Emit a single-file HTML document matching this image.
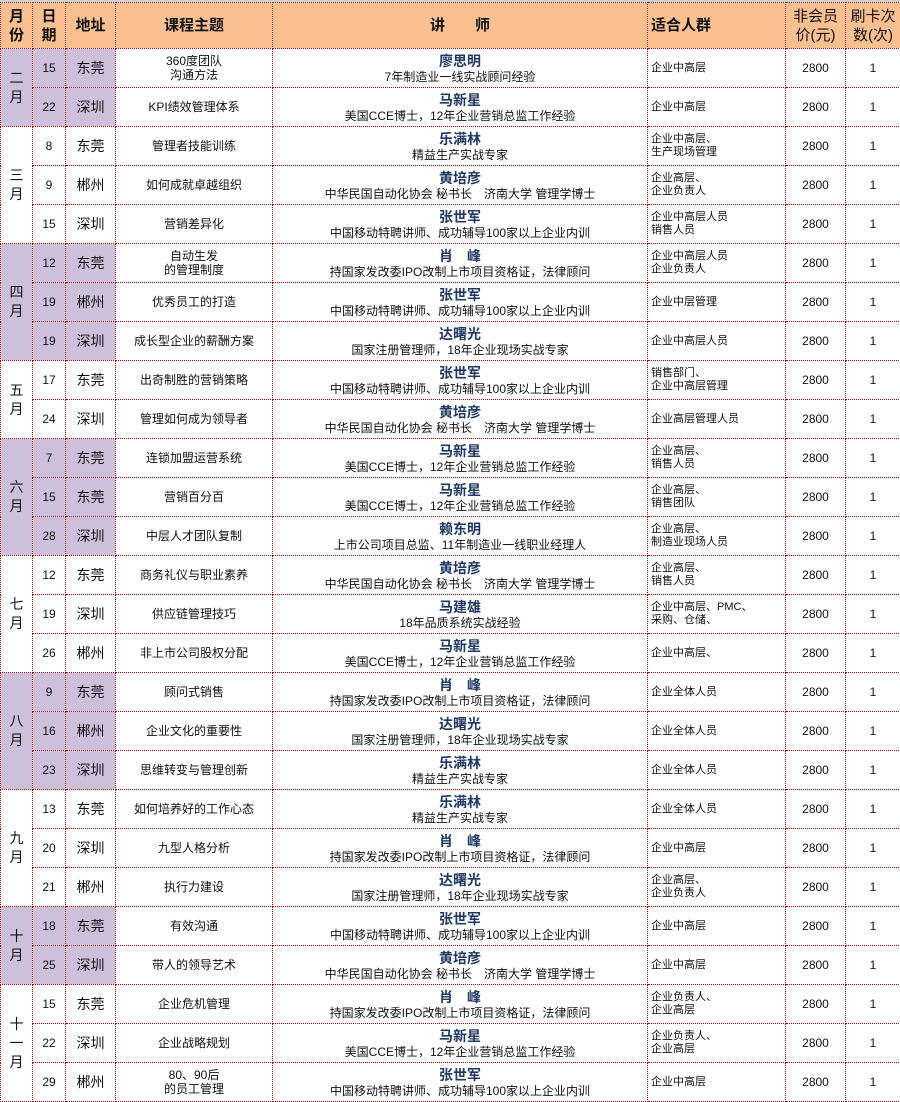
<!DOCTYPE html>
<html><head><meta charset="utf-8"><style>
body{margin:0;background:#fff;font-family:"Liberation Sans","Noto Sans CJK SC",sans-serif;}
.top{height:2px;background:#d0d0d0;}
table{border-collapse:collapse;table-layout:fixed;width:900px;}
td{border:1px dotted #a00000;text-align:center;vertical-align:middle;padding:0;font-size:12px;color:#111;overflow:hidden;line-height:14px;}
tr.h td{background:#fac090;height:45px;font-weight:bold;font-size:15px;line-height:19px;}
tr.r td{height:38px;}
.p{background:#ccc0da;}
.m{font-size:14px;line-height:19px;}
.ad{font-size:14px;}
.n{color:#1f3864;font-weight:bold;font-size:14px;line-height:17px;}
.d{font-size:12px;line-height:14px;}
.a{text-align:left;padding-left:3px;font-size:11px;line-height:13px;}
</style></head><body><div class="top"></div>
<table>
<colgroup><col style="width:32px"><col style="width:33px"><col style="width:50px"><col style="width:157px"><col style="width:375px"><col style="width:138px"><col style="width:60px"><col style="width:55px"></colgroup>
<tr class="h"><td>月<br>份</td><td>日<br>期</td><td>地址</td><td>课程主题</td><td>讲　　师</td><td style="text-align:left;padding-left:3px">适合人群</td><td style="font-weight:normal">非会员<br>价(元)</td><td style="font-weight:normal">刷卡次<br>数(次)</td></tr>

<tr class="r"><td rowspan="2" class="p m">二<br>月</td><td class="p">15</td><td class="p ad">东莞</td><td>360度团队<br>沟通方法</td><td><div class="n">廖思明</div><div class="d">7年制造业一线实战顾问经验</div></td><td class="a">企业中高层</td><td>2800</td><td>1</td></tr>
<tr class="r"><td class="p">22</td><td class="p ad">深圳</td><td>KPI绩效管理体系</td><td><div class="n">马新星</div><div class="d">美国CCE博士，12年企业营销总监工作经验</div></td><td class="a">企业中高层</td><td>2800</td><td>1</td></tr>

<tr class="r"><td rowspan="3" class="m">三<br>月</td><td>8</td><td class="ad">东莞</td><td>管理者技能训练</td><td><div class="n">乐满林</div><div class="d">精益生产实战专家</div></td><td class="a">企业中高层、<br>生产现场管理</td><td>2800</td><td>1</td></tr>
<tr class="r"><td>9</td><td class="ad">郴州</td><td>如何成就卓越组织</td><td><div class="n">黄培彦</div><div class="d">中华民国自动化协会 秘书长　济南大学 管理学博士</div></td><td class="a">企业高层、<br>企业负责人</td><td>2800</td><td>1</td></tr>
<tr class="r"><td>15</td><td class="ad">深圳</td><td>营销差异化</td><td><div class="n">张世军</div><div class="d">中国移动特聘讲师、成功辅导100家以上企业内训</div></td><td class="a">企业中高层人员<br>销售人员</td><td>2800</td><td>1</td></tr>

<tr class="r"><td rowspan="3" class="p m">四<br>月</td><td class="p">12</td><td class="p ad">东莞</td><td>自动生发<br>的管理制度</td><td><div class="n">肖　峰</div><div class="d">持国家发改委IPO改制上市项目资格证，法律顾问</div></td><td class="a">企业中高层人员<br>企业负责人</td><td>2800</td><td>1</td></tr>
<tr class="r"><td class="p">19</td><td class="p ad">郴州</td><td>优秀员工的打造</td><td><div class="n">张世军</div><div class="d">中国移动特聘讲师、成功辅导100家以上企业内训</div></td><td class="a">企业中层管理</td><td>2800</td><td>1</td></tr>
<tr class="r"><td class="p">19</td><td class="p ad">深圳</td><td>成长型企业的薪酬方案</td><td><div class="n">达曙光</div><div class="d">国家注册管理师，18年企业现场实战专家</div></td><td class="a">企业中高层人员</td><td>2800</td><td>1</td></tr>

<tr class="r"><td rowspan="2" class="m">五<br>月</td><td>17</td><td class="ad">东莞</td><td>出奇制胜的营销策略</td><td><div class="n">张世军</div><div class="d">中国移动特聘讲师、成功辅导100家以上企业内训</div></td><td class="a">销售部门、<br>企业中高层管理</td><td>2800</td><td>1</td></tr>
<tr class="r"><td>24</td><td class="ad">深圳</td><td>管理如何成为领导者</td><td><div class="n">黄培彦</div><div class="d">中华民国自动化协会 秘书长　济南大学 管理学博士</div></td><td class="a">企业高层管理人员</td><td>2800</td><td>1</td></tr>

<tr class="r"><td rowspan="3" class="p m">六<br>月</td><td class="p">7</td><td class="p ad">东莞</td><td>连锁加盟运营系统</td><td><div class="n">马新星</div><div class="d">美国CCE博士，12年企业营销总监工作经验</div></td><td class="a">企业高层、<br>销售人员</td><td>2800</td><td>1</td></tr>
<tr class="r"><td class="p">15</td><td class="p ad">东莞</td><td>营销百分百</td><td><div class="n">马新星</div><div class="d">美国CCE博士，12年企业营销总监工作经验</div></td><td class="a">企业高层、<br>销售团队</td><td>2800</td><td>1</td></tr>
<tr class="r"><td class="p">28</td><td class="p ad">深圳</td><td>中层人才团队复制</td><td><div class="n">赖东明</div><div class="d">上市公司项目总监、11年制造业一线职业经理人</div></td><td class="a">企业高层、<br>制造业现场人员</td><td>2800</td><td>1</td></tr>

<tr class="r"><td rowspan="3" class="m">七<br>月</td><td>12</td><td class="ad">东莞</td><td>商务礼仪与职业素养</td><td><div class="n">黄培彦</div><div class="d">中华民国自动化协会 秘书长　济南大学 管理学博士</div></td><td class="a">企业高层、<br>销售人员</td><td>2800</td><td>1</td></tr>
<tr class="r"><td>19</td><td class="ad">深圳</td><td>供应链管理技巧</td><td><div class="n">马建雄</div><div class="d">18年品质系统实战经验</div></td><td class="a">企业中高层、PMC、<br>采购、仓储、</td><td>2800</td><td>1</td></tr>
<tr class="r"><td>26</td><td class="ad">郴州</td><td>非上市公司股权分配</td><td><div class="n">马新星</div><div class="d">美国CCE博士，12年企业营销总监工作经验</div></td><td class="a">企业中高层、</td><td>2800</td><td>1</td></tr>

<tr class="r"><td rowspan="3" class="p m">八<br>月</td><td class="p">9</td><td class="p ad">东莞</td><td>顾问式销售</td><td><div class="n">肖　峰</div><div class="d">持国家发改委IPO改制上市项目资格证，法律顾问</div></td><td class="a">企业全体人员</td><td>2800</td><td>1</td></tr>
<tr class="r"><td class="p">16</td><td class="p ad">郴州</td><td>企业文化的重要性</td><td><div class="n">达曙光</div><div class="d">国家注册管理师，18年企业现场实战专家</div></td><td class="a">企业全体人员</td><td>2800</td><td>1</td></tr>
<tr class="r"><td class="p">23</td><td class="p ad">深圳</td><td>思维转变与管理创新</td><td><div class="n">乐满林</div><div class="d">精益生产实战专家</div></td><td class="a">企业全体人员</td><td>2800</td><td>1</td></tr>

<tr class="r"><td rowspan="3" class="m">九<br>月</td><td>13</td><td class="ad">东莞</td><td>如何培养好的工作心态</td><td><div class="n">乐满林</div><div class="d">精益生产实战专家</div></td><td class="a">企业全体人员</td><td>2800</td><td>1</td></tr>
<tr class="r"><td>20</td><td class="ad">深圳</td><td>九型人格分析</td><td><div class="n">肖　峰</div><div class="d">持国家发改委IPO改制上市项目资格证，法律顾问</div></td><td class="a">企业中高层</td><td>2800</td><td>1</td></tr>
<tr class="r"><td>21</td><td class="ad">郴州</td><td>执行力建设</td><td><div class="n">达曙光</div><div class="d">国家注册管理师，18年企业现场实战专家</div></td><td class="a">企业高层、<br>企业负责人</td><td>2800</td><td>1</td></tr>

<tr class="r"><td rowspan="2" class="p m">十<br>月</td><td class="p">18</td><td class="p ad">东莞</td><td>有效沟通</td><td><div class="n">张世军</div><div class="d">中国移动特聘讲师、成功辅导100家以上企业内训</div></td><td class="a">企业中高层</td><td>2800</td><td>1</td></tr>
<tr class="r"><td class="p">25</td><td class="p ad">深圳</td><td>带人的领导艺术</td><td><div class="n">黄培彦</div><div class="d">中华民国自动化协会 秘书长　济南大学 管理学博士</div></td><td class="a">企业中高层</td><td>2800</td><td>1</td></tr>

<tr class="r"><td rowspan="3" class="m">十<br>一<br>月</td><td>15</td><td class="ad">东莞</td><td>企业危机管理</td><td><div class="n">肖　峰</div><div class="d">持国家发改委IPO改制上市项目资格证，法律顾问</div></td><td class="a">企业负责人、<br>企业高层</td><td>2800</td><td>1</td></tr>
<tr class="r"><td>22</td><td class="ad">深圳</td><td>企业战略规划</td><td><div class="n">马新星</div><div class="d">美国CCE博士，12年企业营销总监工作经验</div></td><td class="a">企业负责人、<br>企业高层</td><td>2800</td><td>1</td></tr>
<tr class="r"><td>29</td><td class="ad">郴州</td><td>80、90后<br>的员工管理</td><td><div class="n">张世军</div><div class="d">中国移动特聘讲师、成功辅导100家以上企业内训</div></td><td class="a">企业中高层</td><td>2800</td><td>1</td></tr>
</table>
</body></html>
